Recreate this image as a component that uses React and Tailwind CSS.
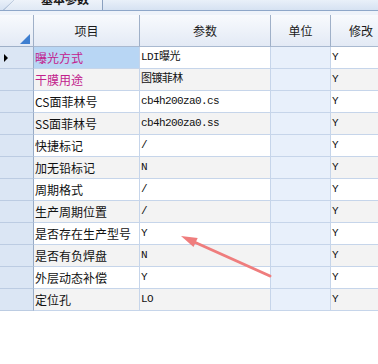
import React from "react";

const rows = [
  { name: "曝光方式", value: "LDI曝光", edit: "Y", pink: true, selected: true },
  { name: "干膜用途", value: "图镀菲林", edit: "Y", pink: true },
  { name: "CS面菲林号", value: "cb4h200za0.cs", edit: "Y" },
  { name: "SS面菲林号", value: "cb4h200za0.ss", edit: "Y" },
  { name: "快捷标记", value: "/", edit: "Y" },
  { name: "加无铅标记", value: "N", edit: "Y" },
  { name: "周期格式", value: "/", edit: "Y" },
  { name: "生产周期位置", value: "/", edit: "Y" },
  { name: "是否存在生产型号", value: "Y", edit: "Y" },
  { name: "是否有负焊盘", value: "N", edit: "Y" },
  { name: "外层动态补偿", value: "Y", edit: "Y" },
  { name: "定位孔", value: "LO", edit: "Y" },
];

const cjk = "font-['SimSun','Noto_Sans_CJK_SC',sans-serif]";
const mono = "font-['Liberation_Mono','Noto_Sans_CJK_SC',monospace] text-[11px] tracking-[-0.6px]";

function HeaderCell({ children, last }) {
  return (
    <div
      className={`flex items-center justify-center h-[32px] border-b border-[#a9b9d0] bg-gradient-to-b from-[#f8fafd] to-[#e3eaf5] text-[12px] text-[#1a1a1a] ${cjk} ${
        last ? "" : "border-r border-r-[#9fb0c8]"
      }`}
    >
      {children}
    </div>
  );
}

export default function App() {
  return (
    <div className="relative w-[378px] h-[364px] overflow-hidden bg-white">
      {/* tab strip */}
      <div className="flex h-[10px] bg-gradient-to-b from-[#e9f0f9] to-[#d6e2f2]">
        <div className="w-[3px]" />
        <div className="relative w-[100px] h-[10px] bg-[#8aa0bf] [clip-path:polygon(11px_0,100%_0,100%_100%,0_100%)]">
          <div className="absolute inset-[0_1px_0_1px] bg-gradient-to-b from-[#eef3fa] to-[#e0e9f5] [clip-path:polygon(10px_0,100%_0,100%_100%,0_100%)] overflow-hidden">
            <div className={`mt-[-7px] pl-[37px] text-[12px] leading-[12px] font-bold text-[#1a1a1a] ${cjk}`}>
              基本参数
            </div>
          </div>
        </div>
      </div>
      <div className="h-[1px] bg-[#8ea7c9]" />

      <div className="flex h-[353px]">
        <div className="w-[3px] bg-[#dfe6f0]" />
        <div className="w-[1px] bg-[#68788f]" />
        <div className="w-[1px] bg-white" />
        <div className="flex-1 flex flex-col">
          <div className="h-[4px] bg-[#eef3fa]" />
          <div className="grid grid-cols-[34px_106px_131px_60px_60px]">
            {/* corner cell */}
            <div className="relative h-[32px] border-b border-r border-[#9fb0c8] bg-gradient-to-b from-[#f8fafd] to-[#e3eaf5]">
              <div className="absolute right-[3px] bottom-[2px] w-0 h-0 border-l-[10px] border-l-transparent border-b-[10px] border-b-[#3f7fd0]" />
            </div>
            <HeaderCell>项目</HeaderCell>
            <HeaderCell>参数</HeaderCell>
            <HeaderCell>单位</HeaderCell>
            <HeaderCell last>修改</HeaderCell>

            {rows.map((r, i) => {
              const bg = i % 2 === 1 ? "bg-[#f3f3f3]" : "bg-white";
              return (
                <React.Fragment key={r.name}>
                  <div className="relative h-[22px] border-b border-r border-b-[#bccce2] border-r-[#98abc6] bg-[#dbe6f4]">
                    {r.selected && (
                      <div className="absolute left-[4px] top-[7px] w-0 h-0 border-t-[4px] border-t-transparent border-b-[4px] border-b-transparent border-l-[4px] border-l-black" />
                    )}
                  </div>
                  <div
                    className={`flex items-center h-[22px] pl-[1px] border-b border-r border-[#c6d5ea] text-[12px] whitespace-nowrap ${cjk} ${
                      r.selected ? "bg-[#b8d6f4]" : bg
                    } ${r.pink ? "text-[#c2208c]" : "text-[#111]"}`}
                  >
                    {r.name}
                  </div>
                  <div className={`flex items-center h-[22px] pl-[1px] border-b border-r border-[#c6d5ea] text-[#111] whitespace-nowrap ${mono} ${bg}`}>
                    {r.value}
                  </div>
                  <div className="h-[22px] border-b border-r border-[#c6d5ea] bg-[#e8f0fb]" />
                  <div className={`flex items-center h-[22px] pl-[1px] border-b border-[#c6d5ea] text-[#111] ${mono} ${bg}`}>
                    {r.edit}
                  </div>
                </React.Fragment>
              );
            })}
          </div>
        </div>
      </div>

      {/* annotation arrow */}
      <svg className="absolute left-0 top-0 pointer-events-none" width="378" height="364">
        <line x1="270" y1="276" x2="192" y2="241" stroke="#ef7d7d" strokeWidth="3" strokeLinecap="round" />
        <polygon points="181,236 193.5,247 197.7,238" fill="#ef7d7d" />
      </svg>
    </div>
  );
}
